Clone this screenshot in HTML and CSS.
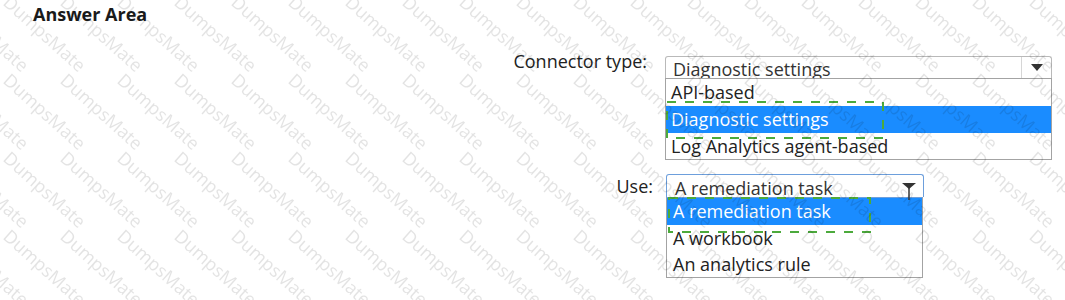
FILE: index.html
```html
<!DOCTYPE html>
<html lang="en">
<head>
<meta charset="utf-8">
<title>Answer Area</title>
<link rel="stylesheet" href="styles.css">
</head>
<body>
<div class="page">
  <h1 class="title">Answer Area</h1>

  <div class="qa">
    <div class="row row-connector">
      <span class="label label-connector">Connector type:</span>
      <div class="dropdown dd-connector">
        <div class="dd-head">
          <span class="dd-value">Diagnostic settings</span>
          <span class="dd-btn">
            <svg width="12" height="7" viewBox="0 0 12 7"><polygon points="0,0 12,0 6,7" fill="#333"/></svg>
          </span>
        </div>
        <ul class="dd-list">
          <li class="dd-item">API-based</li>
          <li class="dd-item is-selected">Diagnostic settings</li>
          <li class="dd-item">Log Analytics agent-based</li>
        </ul>
        <svg class="answer-box answer-box-1" width="218" height="38" viewBox="0 0 218 38">
          <rect x="1" y="1" width="216" height="36" fill="none" stroke="#4caa3c" stroke-width="2" stroke-dasharray="9 9"/>
        </svg>
      </div>
    </div>

    <div class="row row-use">
      <span class="label label-use">Use:</span>
      <div class="dropdown dd-use">
        <div class="dd-head dd-head-focus">
          <span class="dd-value">A remediation task</span>
        </div>
        <ul class="dd-list">
          <li class="dd-item is-selected">A remediation task</li>
          <li class="dd-item">A workbook</li>
          <li class="dd-item">An analytics rule</li>
        </ul>
        <svg class="dd-funnel" width="16" height="19" viewBox="0 0 16 19">
          <polygon points="1,1 15,1 8,7" fill="#333"/>
          <line x1="8" y1="6" x2="8" y2="18" stroke="#333" stroke-width="1.5"/>
        </svg>
        <svg class="answer-box answer-box-2" width="203" height="36" viewBox="0 0 203 36">
          <rect x="1" y="1" width="201" height="34" fill="none" stroke="#4caa3c" stroke-width="2" stroke-dasharray="9 9"/>
        </svg>
      </div>
    </div>
  </div>

  <svg class="watermark" width="1065" height="300" aria-hidden="true">
    <defs>
      <pattern id="wm" width="57" height="78" x="2" y="72" patternUnits="userSpaceOnUse">
        <g class="wm-text">
          <text transform="translate(0,10) rotate(42)">DumpsMate</text>
          <text transform="translate(-57,10) rotate(42)">DumpsMate</text>
          <text transform="translate(0,-68) rotate(42)">DumpsMate</text>
          <text transform="translate(-57,-68) rotate(42)">DumpsMate</text>
          <text transform="translate(0,88) rotate(42)">DumpsMate</text>
          <text transform="translate(-57,88) rotate(42)">DumpsMate</text>
        </g>
      </pattern>
    </defs>
    <rect width="1065" height="300" fill="url(#wm)"/>
  </svg>
</div>
</body>
</html>
```

FILE: styles.css
```css
* { box-sizing: border-box; }

html, body {
  margin: 0;
  padding: 0;
  background: #ffffff;
}

body {
  font-family: "Open Sans", "Noto Sans", sans-serif;
  color: #222;
}

.page {
  position: relative;
  width: 1065px;
  height: 300px;
  overflow: hidden;
}

.title {
  margin: 0;
  padding: 4px 0 0 33px;
  font-size: 18px;
  line-height: 20px;
  font-weight: 700;
  color: #1a1a1a;
}

.qa {
  display: flex;
  flex-direction: column;
  margin-top: 32px;
}

.row {
  display: flex;
  align-items: flex-start;
}

.row-use {
  margin-top: 14px;
}

.label {
  width: 653px;
  flex: none;
  text-align: right;
  font-size: 18px;
  line-height: 24px;
  color: #222;
  white-space: nowrap;
}

.label-connector {
  padding-right: 6px;
  margin-top: -7px;
}

.label-use {
  margin-top: 0;
}

.dropdown {
  position: relative;
  flex: none;
}

.dd-connector {
  margin-left: 12px;
  width: 387px;
}

.dd-use {
  margin-left: 13px;
  width: 258px;
}

.dd-head {
  display: flex;
  height: 22px;
  overflow: hidden;
  border: 1px solid #b9b9b9;
  border-bottom: none;
  border-radius: 3px 3px 0 0;
  background: #fff;
}

.dd-head-focus {
  height: 23px;
  border: 1px solid #6d9fdc;
  border-bottom: none;
  border-radius: 3px 3px 0 0;
}

.dd-value {
  flex: 1;
  padding-left: 7px;
  font-size: 18px;
  line-height: 24px;
  white-space: nowrap;
  color: #333;
}

.dd-use .dd-value {
  padding-left: 8px;
  line-height: 26px;
}

.dd-btn {
  width: 30px;
  flex: none;
  display: flex;
  justify-content: center;
  padding-top: 7px;
  border-left: 1px solid #d6d6d6;
}

.dd-list {
  list-style: none;
  margin: 0;
  padding: 0;
  border: 1px solid #a3a3a3;
  background: #fff;
}

.dd-connector .dd-list {
  height: 82px;
}

.dd-use .dd-list {
  height: 81px;
  width: 257px;
  border-top-color: #6d9fdc;
}

.dd-item {
  height: 27px;
  line-height: 27px;
  padding-left: 5px;
  font-size: 18px;
  white-space: nowrap;
  color: #222;
}

.dd-use .dd-item {
  height: 26.5px;
  line-height: 26px;
  padding-left: 6px;
}

.dd-item.is-selected {
  background: #1a8cff;
  color: #fff;
}

.dd-funnel {
  position: absolute;
  left: 235px;
  top: 8px;
}

.answer-box {
  position: absolute;
}

.answer-box-1 {
  left: 1px;
  top: 45px;
}

.answer-box-2 {
  left: 2px;
  top: 23px;
}

.watermark {
  position: absolute;
  left: 0;
  top: 0;
  pointer-events: none;
}

.wm-text {
  font-family: "Open Sans", "Noto Sans", sans-serif;
  font-size: 18px;
  fill: #000;
  fill-opacity: 0.11;
}
```
